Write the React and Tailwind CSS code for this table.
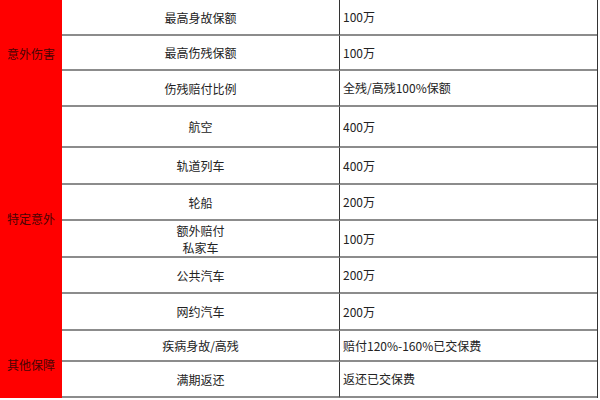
import React from 'react';

const rows = [
  { item: '最高身故保额', value: '100万' },
  { item: '最高伤残保额', value: '100万' },
  { item: '伤残赔付比例', value: '全残/高残100%保额' },
  { item: '航空', value: '400万' },
  { item: '轨道列车', value: '400万' },
  { item: '轮船', value: '200万' },
  { item: ['额外赔付', '私家车'], value: '100万' },
  { item: '公共汽车', value: '200万' },
  { item: '网约汽车', value: '200万' },
  { item: '疾病身故/高残', value: '赔付120%-160%已交保费' },
  { item: '满期返还', value: '返还已交保费' },
];

const groups = [
  { label: '意外伤害', span: 'row-span-3', start: 0 },
  { label: '特定意外', span: 'row-span-6', start: 3 },
  { label: '其他保障', span: 'row-span-2', start: 9 },
];

function App() {
  return (
    <div
      className="w-[600px] h-[400px] bg-white text-[12px] text-[#222]"
      style={{ fontFamily: '"Noto Sans CJK SC", "Noto Sans", sans-serif' }}
    >
      <div className="grid w-[598px] grid-cols-[62px_277px_1fr] grid-rows-[36px_35px_36px_41px_37px_36px_37px_36px_37px_31px_36px] border-r border-[#333]">
        {rows.map((r, i) => {
          const group = groups.find(g => g.start === i);
          return (
            <React.Fragment key={i}>
              {group && (
                <div className={`${group.span} bg-[#ff0000] flex items-center justify-center text-[#4a0404] leading-none`}>
                  {group.label}
                </div>
              )}
              <div className="border-b-2 border-[#8c8c8c] flex flex-col items-center justify-center leading-[17px]">
                {Array.isArray(r.item) ? r.item.map(t => <span key={t}>{t}</span>) : r.item}
              </div>
              <div className="border-b-2 border-l border-b-[#8c8c8c] border-l-[#333] flex items-center pl-[3px]">
                {r.value}
              </div>
            </React.Fragment>
          );
        })}
      </div>
    </div>
  );
}

export default App;
